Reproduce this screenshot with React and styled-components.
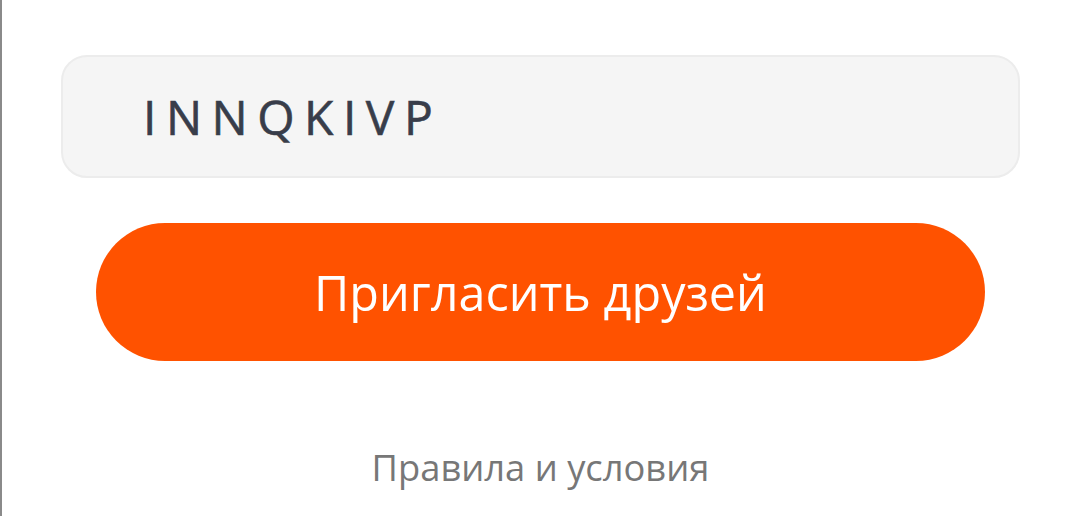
import React from "react";
import styled, { createGlobalStyle } from "styled-components";

const Global = createGlobalStyle`
  html, body { margin: 0; padding: 0; background: #fff; }
  body { font-family: "Open Sans", "Noto Sans", sans-serif; }
`;

const Page = styled.div`
  width: 1066px;
  height: 516px;
  box-sizing: border-box;
  border-left: 2px solid #8a8a8a;
  overflow: hidden;
  display: flex;
  flex-direction: column;
  padding: 55px 0 0 59px;
`;

const CodeBox = styled.div`
  width: 959px;
  height: 123px;
  box-sizing: border-box;
  background: #f5f5f5;
  border: 2px solid #ececec;
  border-radius: 26px;
  display: flex;
  align-items: center;
  padding-left: 80px;
`;

const Code = styled.span`
  font-size: 48px;
  font-weight: 400;
  letter-spacing: 9.5px;
  color: #383d4a;
  -webkit-text-stroke: 0.6px #383d4a;
`;

const InviteButton = styled.button`
  margin: 45px 0 0 35px;
  width: 889px;
  height: 138px;
  border: none;
  border-radius: 69px;
  background: #ff5200;
  color: #fff;
  font-family: "Open Sans", "Noto Sans", sans-serif;
  font-size: 48.5px;
  font-weight: 400;
  display: flex;
  align-items: center;
  justify-content: center;
  padding: 0;
`;

const Terms = styled.a`
  margin: 81px 0 0 0;
  width: 959px;
  text-align: center;
  font-size: 36.3px;
  color: #777;
  text-decoration: none;
`;

export default function App() {
  return (
    <>
      <Global />
      <Page>
        <CodeBox>
          <Code>INNQKIVP</Code>
        </CodeBox>
        <InviteButton>Пригласить друзей</InviteButton>
        <Terms>Правила и условия</Terms>
      </Page>
    </>
  );
}
